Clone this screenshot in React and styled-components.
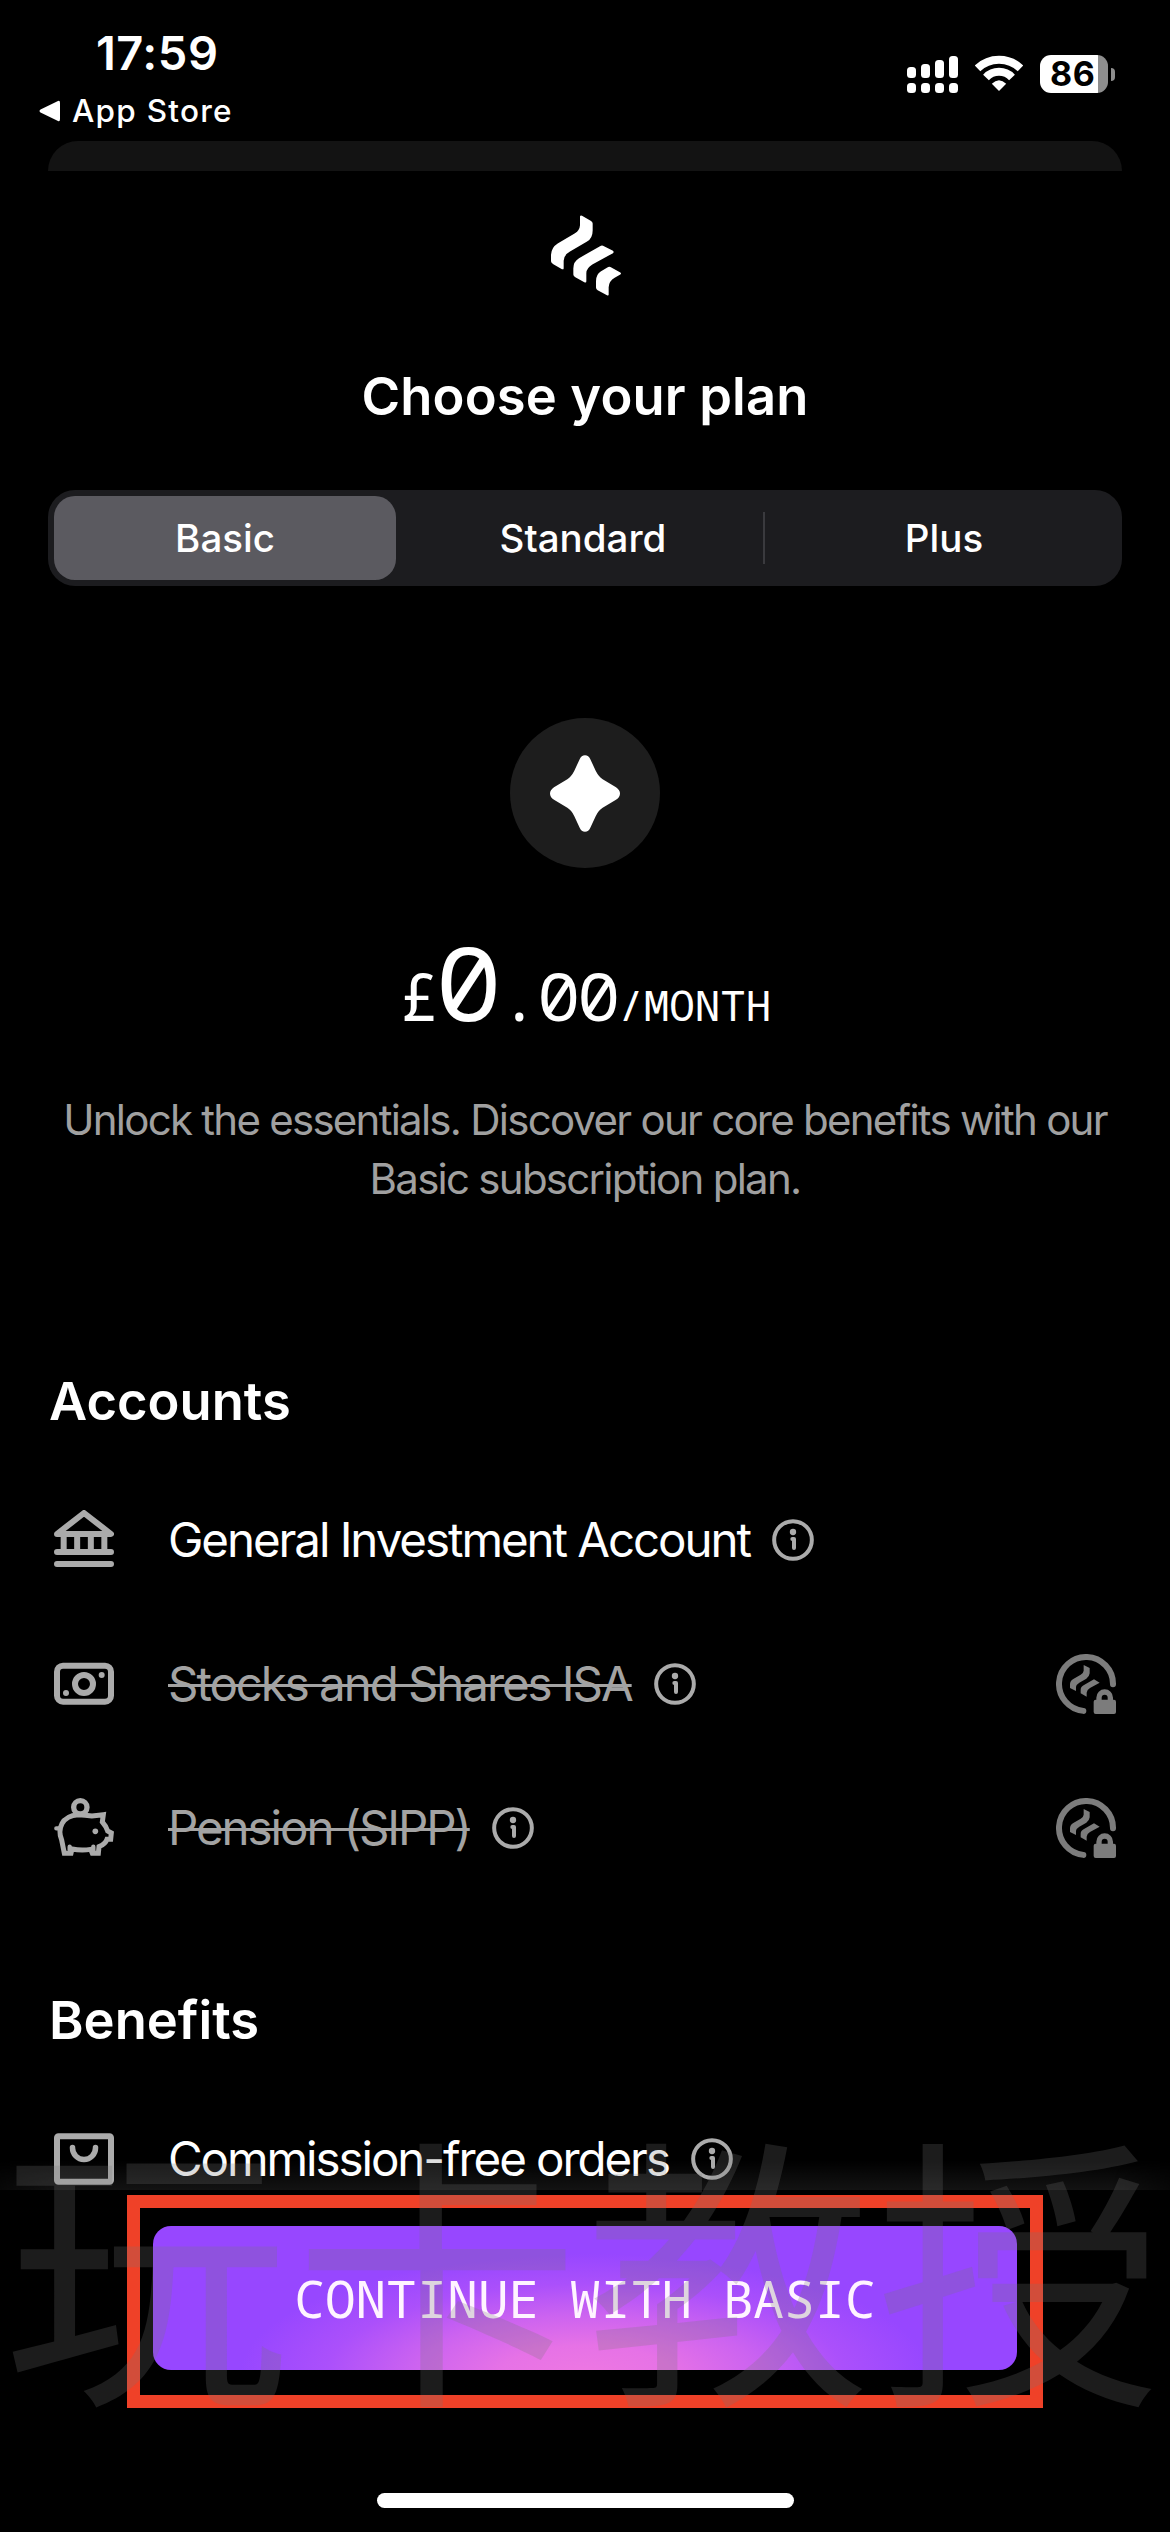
import styled, { createGlobalStyle, css } from "styled-components"

const sans = `Inter, "Liberation Sans", sans-serif`
const mono = `"Noto Sans Mono", "DejaVu Sans Mono", monospace`

const GlobalStyle = createGlobalStyle`
  *, *::before, *::after {
    box-sizing: border-box;
  }

  body {
    margin: 0;
    background: #000;
    color: #fff;
    font-family: ${sans};
  }

  svg {
    display: block;
    flex-shrink: 0;
  }
`

const Screen = styled.div`
  position: relative;
  display: flex;
  flex-direction: column;
  width: 1170px;
  height: 2532px;
  overflow: hidden;
  background: #000;
`

/* Status bar */

const StatusBarRow = styled.header`
  display: flex;
  justify-content: space-between;
  height: 141px;
`

const StatusLeft = styled.div`
  display: flex;
  flex-direction: column;
  padding-top: 24px;
`

const Clock = styled.div`
  padding-left: 96px;
  font-size: 47px;
  font-weight: 600;
  line-height: 57px;
  letter-spacing: 0.5px;
`

const BackLink = styled.div`
  display: flex;
  align-items: center;
  gap: 12px;
  margin-top: 10px;
  padding-left: 39px;
  font-size: 31.5px;
  font-weight: 450;
  line-height: 40px;
  letter-spacing: 1.25px;
`

const StatusRight = styled.div`
  display: flex;
  align-items: flex-start;
  padding: 55px 55px 0 0;
`

const WifiSlot = styled.div`
  margin: 0 17px 0 17px;
`

const Battery = styled.div`
  width: 68px;
  height: 38px;
  padding-left: 10px;
  border-radius: 11px;
  background: linear-gradient(to right, #fff 58px, #8e8e8e 58px);
  color: #000;
  font-size: 34px;
  font-weight: 700;
  line-height: 38px;
  letter-spacing: 0.5px;
`

const BatteryNub = styled.div`
  width: 4px;
  height: 13px;
  margin: 13px 0 0 3px;
  border-radius: 0 5px 5px 0;
  background: #8e8e8e;
`

/* Sheet */

const SheetBehind = styled.div`
  height: 30px;
  margin: 0 48px;
  border-radius: 30px 30px 0 0;
  background: #131313;
`

const Sheet = styled.main`
  position: relative;
  display: flex;
  flex: 1;
  flex-direction: column;
  min-height: 0;
  padding: 44px 48px 0;
  overflow: hidden;

  > * {
    flex-shrink: 0;
  }
`

const LogoSlot = styled.div`
  display: flex;
  justify-content: center;
  padding-left: 2px;
`

const Title = styled.h1`
  margin: 68px 0 0;
  font-size: 52.5px;
  font-weight: 600;
  line-height: 64px;
  letter-spacing: 0.14px;
  text-align: center;
`

const Segments = styled.div`
  display: flex;
  height: 96px;
  margin-top: 62px;
  padding: 6px;
  border-radius: 27px;
  background: #1c1c1f;
`

const Segment = styled.button`
  display: flex;
  flex: 0 0 ${props => props.$width}px;
  align-items: center;
  justify-content: center;
  margin-left: ${props => (props.$selected ? 0 : 7)}px;
  padding: 0;
  border: 0;
  border-radius: 21px;
  background: ${props => (props.$selected ? "#5b5a60" : "transparent")};
  color: #fff;
  font-family: inherit;
  font-size: 38.5px;
  font-weight: 450;
`

const SegmentDivider = styled.div`
  width: 2px;
  height: 52px;
  margin-top: 16px;
  background: #3a3a3e;
`

const PlanBadge = styled.div`
  display: flex;
  align-items: center;
  align-self: center;
  justify-content: center;
  width: 150px;
  height: 150px;
  margin-top: 132px;
  border-radius: 50%;
  background: #1d1d1d;
`

const Price = styled.div`
  display: flex;
  align-items: baseline;
  justify-content: center;
  height: 102px;
  margin-top: 63px;
  font-family: ${mono};
  font-size: 66px;
  line-height: 102px;
`

const Zero = styled.span`
  display: inline-block;
  font-size: ${props => (props.$large ? 102 : 66)}px;
  transform: scaleX(1.1);
`

const PricePeriod = styled.span`
  font-size: 42.5px;
`

const Description = styled.p`
  margin: 57px 0 0;
  color: #a0a0a0;
  font-size: 42px;
  line-height: 59px;
  letter-spacing: -1.74px;
  text-align: center;
  white-space: pre-line;
`

const SectionTitle = styled.h2`
  margin: 0 0 35px 1px;
  font-size: 52.5px;
  font-weight: 600;
  line-height: 64px;
`

const Section = styled.section`
  margin-top: ${props => props.$gap}px;
`

const Row = styled.div`
  display: flex;
  align-items: center;
  height: 144px;
  padding: 0 6px;
`

const RowLabel = styled.span`
  margin: 0 22px 0 54px;
  font-size: 47.5px;
  letter-spacing: -2.08px;
  line-height: 60px;
  white-space: nowrap;

  ${props =>
    props.$struck &&
    css`
      color: #a3a3a3;
      text-decoration: line-through;
      text-decoration-thickness: 3px;
    `}
`

const RowEnd = styled.div`
  margin-left: auto;
`

const BottomFade = styled.div`
  position: absolute;
  right: 0;
  bottom: 0;
  left: 0;
  height: 30px;
  background: linear-gradient(to bottom, rgba(255, 255, 255, 0), rgba(255, 255, 255, 0.075));
  mask-image: linear-gradient(to right, rgba(0, 0, 0, 0.4), #000 60px, #000 1110px, rgba(0, 0, 0, 0.4));
`

/* Footer */

const Footer = styled.footer`
  display: flex;
  flex-direction: column;
  align-items: center;
  justify-content: space-between;
  height: 342px;
  padding: 5px 0 24px;
  background: #000;
`

const Highlight = styled.div`
  width: 916px;
  height: 213px;
  padding: 18px 13px;
  border: 13px solid #ef4128;
`

const ContinueButton = styled.button`
  width: 864px;
  height: 144px;
  padding: 0;
  border: 0;
  border-radius: 18px;
  background: radial-gradient(
      ellipse 345px 122px at 50% 104%,
      #ee78e2 0%,
      #e672e6 25%,
      #cc63f0 50%,
      #ab50fb 75%,
      #9747ff 100%
    )
    #9747ff;
  color: #fff4ff;
  font-family: ${mono};
  font-size: 51px;
  line-height: 141px;
`

const HomeIndicator = styled.div`
  width: 417px;
  height: 15px;
  border-radius: 8px;
  background: #fff;
`

const Watermark = styled.div`
  position: absolute;
  top: 2113px;
  left: 3px;
  color: rgba(117, 117, 117, 0.24);
  font-family: "Noto Sans CJK SC", sans-serif;
  font-size: 286px;
  font-weight: 400;
  line-height: 292px;
  letter-spacing: 5px;
  white-space: nowrap;
  pointer-events: none;
`

/* Icons */

function BackArrow() {
  return (
    <svg width="21" height="22" viewBox="0 0 21 22" fill="#fff">
      <path d="M19 1 Q21 0 21 3 V19 Q21 22 19 21 L1.5 12.5 Q-0.5 11 1.5 9.5 Z" />
    </svg>
  )
}

const signalBars = [
  { x: 0, y: 11 },
  { x: 14, y: 8 },
  { x: 28, y: 4 },
  { x: 42, y: 0 },
]

function Signal() {
  return (
    <svg width="51" height="38" viewBox="0 -1 51 38" fill="#fff">
      {signalBars.map(({ x, y }) => (
        <g key={x}>
          <rect x={x} y={y} width="9" height={22 - y} rx="3.5" />
          <rect x={x} y="27" width="9" height="10" rx="3.5" />
        </g>
      ))}
    </svg>
  )
}

function Wifi() {
  return (
    <svg width="48" height="37" viewBox="975 55 48 37" fill="none" stroke="#fff" strokeWidth="8">
      <path d="M977.5 68.3 A31 31 0 0 1 1020.5 68.3" />
      <path d="M986 77.4 A18 18 0 0 1 1012 77.4" />
      <path d="M999 91 L991.8 83.8 Q999 76.8 1006.2 83.8 Z" fill="#fff" stroke="none" />
    </svg>
  )
}

function Logo() {
  return (
    <svg width="70" height="81" viewBox="633 74 210 242" fill="#fff">
      <path d="M720 78 Q721 74 726 76 L752 91 Q758 94 758 99 V120 Q758 145 740 154 L690 183 Q671 194 671 211 V233 Q671 238 666 236 L640 221 Q633 217 633 212 V193 Q634 171 653 159 L705 128 Q719 119 720 104 Z" />
      <path d="M780 167 Q786 163 792 167 L819 181 Q823 185 819 188 L757 222 Q739 233 739 248 V272 Q739 278 733 275 L706 260 Q700 257 700 252 V234 Q700 213 717 203 Z" />
      <path d="M802 231 Q808 227 814 231 L841 246 Q845 249 841 252 L824 262 Q807 272 806 290 V312 Q806 316 801 314 L773 299 Q768 296 768 291 V272 Q768 252 782 243 Z" />
    </svg>
  )
}

function Star() {
  return (
    <svg width="70" height="77" viewBox="510 163 210 230" fill="#fff">
      <path d="M615 163 Q626 163 631 175 L647 210 Q656 228 668 235 L708 259 Q720 267 720 278 Q720 289 708 297 L668 321 Q656 328 647 346 L631 381 Q626 393 615 393 Q604 393 599 381 L583 346 Q574 328 562 321 L522 297 Q510 289 510 278 Q510 267 522 259 L562 235 Q574 228 583 210 L599 175 Q604 163 615 163 Z" />
    </svg>
  )
}

function RowIcon({ viewBox, children }) {
  return (
    <svg
      width="60"
      height="60"
      viewBox={viewBox}
      fill="none"
      stroke="#ababab"
      strokeLinecap="round"
      strokeLinejoin="round"
    >
      {children}
    </svg>
  )
}

function BankIcon() {
  return (
    <RowIcon viewBox="72 450 180 180">
      <path
        strokeWidth="18"
        d="M81 522 L162 459 L243 522 Z M101 526 V572 M141.5 526 V572 M182.5 526 V572 M223 526 V572 M81 576 H243 M81 612 H243"
      />
    </RowIcon>
  )
}

function CashIcon() {
  return (
    <RowIcon viewBox="72 882 180 180">
      <rect x="81" y="917" width="162" height="108" rx="18" strokeWidth="18" />
      <circle cx="162" cy="972" r="27" strokeWidth="18" />
      <circle cx="215" cy="945" r="9" fill="#ababab" stroke="none" />
      <circle cx="108" cy="999" r="9" fill="#ababab" stroke="none" />
    </RowIcon>
  )
}

function PiggyIcon() {
  return (
    <RowIcon viewBox="72 54 180 180">
      <circle cx="151" cy="82" r="20" strokeWidth="16" />
      <path
        strokeWidth="15"
        strokeLinejoin="miter"
        d="M220 104 L186 108 Q165 105 145 104 Q108 107 96 131 Q84 154 95 180 L103 220 H123 L126 207 Q155 213 182 208 L187 220 H205 L207 200 Q226 192 231 178 L242 178 L244 159 L233 153 Q228 138 217 126 Z"
      />
      <path strokeWidth="13" d="M79 145 H90 M119 200 V210 M190 200 V212" />
      <circle cx="196" cy="154" r="8.5" fill="#ababab" stroke="none" />
    </RowIcon>
  )
}

function BagIcon() {
  return (
    <RowIcon viewBox="54 2129 60 60">
      <rect x="57" y="2136.3" width="54" height="45.4" rx="1.5" strokeWidth="6" />
      <path strokeWidth="5.5" d="M72.5 2147.5 V2148 A11.5 11.5 0 0 0 95.5 2148 V2147.5" />
    </RowIcon>
  )
}

function InfoIcon() {
  return (
    <svg
      width="42"
      height="42"
      viewBox="0 0 126 126"
      fill="none"
      stroke="#ababab"
      strokeWidth="12"
      strokeLinecap="round"
      strokeLinejoin="round"
    >
      <circle cx="63" cy="63" r="56.5" />
      <circle cx="63" cy="39" r="9.5" fill="#ababab" stroke="none" />
      <path d="M61 60 H66 V87" />
    </svg>
  )
}

function LockedIcon() {
  return (
    <svg width="60" height="60" viewBox="168 72 180 180" fill="#7c7c7c">
      <path
        d="M339 163 A81 81 0 1 0 250 242.6"
        fill="none"
        stroke="#7c7c7c"
        strokeWidth="18"
        strokeLinecap="round"
      />
      <path d="M251 105 L269 114 V130 Q268 140 259 146 L238 158 Q228 164 228 171 V183 L210 174 V163 Q210 153 220 147 L242 134 Q250 130 251 122 Z" />
      <path d="M282 148 L299 158 L270 174 Q260 180 260 188 V200 L242 190 V179 Q242 170 252 165 Z" />
      <path
        d="M297 214 V203 A17 17 0 0 1 331 203 V214"
        fill="none"
        stroke="#7c7c7c"
        strokeWidth="16"
      />
      <rect x="281" y="209" width="67" height="43" rx="6" />
    </svg>
  )
}

/* Page */

const accounts = [
  { label: "General Investment Account", Icon: BankIcon },
  { label: "Stocks and Shares ISA", Icon: CashIcon, locked: true },
  { label: "Pension (SIPP)", Icon: PiggyIcon, locked: true },
]

const benefits = [{ label: "Commission-free orders", Icon: BagIcon }]

function FeatureRow({ label, Icon, locked }) {
  return (
    <Row>
      <Icon />
      <RowLabel $struck={locked}>{label}</RowLabel>
      <InfoIcon />
      {locked && (
        <RowEnd>
          <LockedIcon />
        </RowEnd>
      )}
    </Row>
  )
}

function FeatureSection({ title, rows, gap }) {
  return (
    <Section $gap={gap}>
      <SectionTitle>{title}</SectionTitle>
      {rows.map(row => (
        <FeatureRow key={row.label} {...row} />
      ))}
    </Section>
  )
}

function StatusBar() {
  return (
    <StatusBarRow>
      <StatusLeft>
        <Clock>17:59</Clock>
        <BackLink>
          <BackArrow />
          App Store
        </BackLink>
      </StatusLeft>
      <StatusRight>
        <Signal />
        <WifiSlot>
          <Wifi />
        </WifiSlot>
        <Battery>86</Battery>
        <BatteryNub />
      </StatusRight>
    </StatusBarRow>
  )
}

export default function App() {
  return (
    <>
      <GlobalStyle />
      <Screen>
        <StatusBar />
        <SheetBehind />
        <Sheet>
          <LogoSlot>
            <Logo />
          </LogoSlot>
          <Title>Choose your plan</Title>
          <Segments>
            <Segment $width={342} $selected>
              Basic
            </Segment>
            <Segment $width={360}>Standard</Segment>
            <SegmentDivider />
            <Segment $width={344}>Plus</Segment>
          </Segments>
          <PlanBadge>
            <Star />
          </PlanBadge>
          <Price>
            <span>£</span>
            <Zero $large>0</Zero>
            <span>.</span>
            <Zero>0</Zero>
            <Zero>0</Zero>
            <PricePeriod>/MONTH</PricePeriod>
          </Price>
          <Description>
            {"Unlock the essentials. Discover our core benefits with our\nBasic subscription plan."}
          </Description>
          <FeatureSection title="Accounts" rows={accounts} gap={161} />
          <FeatureSection title="Benefits" rows={benefits} gap={88} />
          <BottomFade />
        </Sheet>
        <Footer>
          <Highlight>
            <ContinueButton>CONTINUE WITH BASIC</ContinueButton>
          </Highlight>
          <HomeIndicator />
        </Footer>
        <Watermark>玩卡教授</Watermark>
      </Screen>
    </>
  )
}
